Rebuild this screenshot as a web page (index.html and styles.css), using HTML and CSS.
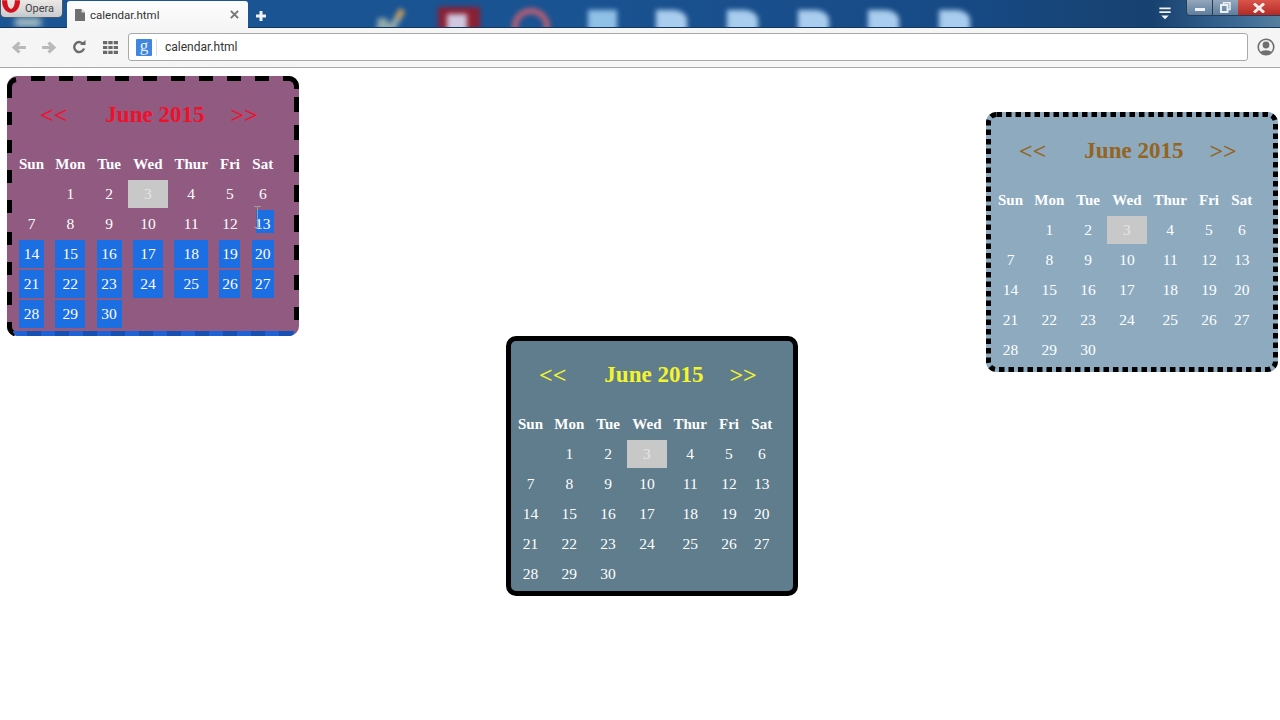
FILE: index.html
```html
<!DOCTYPE html>
<html lang="en">
<head>
<meta charset="utf-8">
<title>calendar.html</title>
<link rel="stylesheet" href="styles.css">
</head>
<body>
<header class="browser">
  <div class="strip">
    <div class="desktop">
      <svg class="blurred b-chart" viewBox="0 0 32 28"><path d="M2 28 L4 14 L12 14 L16 20 L26 4 L31 8 L20 28Z" fill="#8fa7a8"/><path d="M21 12L26 4L31 8L25 16Z" fill="#c99c58"/></svg>
      <div class="blurred b-red"><span></span></div>
      <div class="blurred b-ring"></div>
      <div class="blurred b-doc b1"></div>
      <div class="blurred b-doc b2"></div>
      <div class="blurred b-doc b3"></div>
      <div class="blurred b-doc b4"></div>
      <div class="blurred b-doc b5"></div>
      <div class="blurred b-doc b6"></div>
    </div>
    <div class="opera">
      <svg class="opera-logo" viewBox="0 0 20 14"><path d="M0 0 C0 8 4 13 9.500 13 C15 13 19 8 19 0 L13.500 0 C13.500 6 11.500 9 9.500 9 C7.500 9 5.500 6 5.500 0Z" fill="#d4101c"/></svg>
      <span>Opera</span>
    </div>
    <div class="tab">
      <svg class="tab-icon" viewBox="0 0 10 12"><path d="M0 0H6.500L10 3.500V12H0Z" fill="#6f6f6f"/><path d="M6.500 0V3.500H10" fill="#d8d8d8"/></svg>
      <span class="tab-title">calendar.html</span>
      <svg class="tab-x" viewBox="0 0 10 10"><path d="M1 1L9 9M9 1L1 9" stroke="#777" stroke-width="2.200"/></svg>
    </div>
    <svg class="newtab" viewBox="0 0 12 12"><path d="M6 1V11M1 6H11" stroke="#f0f0f6" stroke-width="3"/></svg>
    <svg class="menu-ic" viewBox="0 0 14 16"><path d="M1 1.500H13M1 5.500H13" stroke="#f2f2f2" stroke-width="2"/><path d="M3 9H11L7 13Z" fill="#f2f2f2"/></svg>
    <div class="winbtns">
      <div class="wb wb-min"><i></i></div>
      <div class="wb wb-max">
        <svg viewBox="0 0 11 11"><path d="M3.500 2.500V.8H10V7.500H8" fill="none" stroke="#e8eef4" stroke-width="1.500"/><rect x="1" y="3" width="6.500" height="7" fill="none" stroke="#e8eef4" stroke-width="2"/></svg>
      </div>
      <div class="wb wb-close"><svg viewBox="0 0 14 10"><path d="M2 .5L12 9.500M12 .5L2 9.500" stroke="#f4eeee" stroke-width="3"/></svg></div>
    </div>
  </div>
  <div class="toolbar">
    <svg class="nav back" viewBox="0 0 14 12"><path d="M13 6H4M7 1.500L2 6L7 10.500" fill="none" stroke="#b9b9b9" stroke-width="3"/></svg>
    <svg class="nav fwd" viewBox="0 0 14 12"><path d="M1 6H10M7 1.500L12 6L7 10.500" fill="none" stroke="#b9b9b9" stroke-width="3"/></svg>
    <svg class="nav reload" viewBox="0 0 14 14"><path d="M11.500 4.500A5 5 0 1 0 12 8.500" fill="none" stroke="#6a6a6a" stroke-width="2.400"/><path d="M8 5H13.500V0Z" fill="#6a6a6a"/></svg>
    <svg class="nav apps" viewBox="0 0 14 12"><path d="M0 0h4v3H0zM5 0h4v3H5zM10 0h4v3h-4zM0 4.500h4v3H0zM5 4.500h4v3H5zM10 4.500h4v3h-4zM0 9h4v3H0zM5 9h4v3H5zM10 9h4v3h-4z" fill="#696969"/></svg>
    <div class="omnibox">
      <span class="gicon">g</span>
      <span class="omni-text">calendar.html</span>
    </div>
    <svg class="profile" viewBox="0 0 18 18"><circle cx="9" cy="9" r="7.800" fill="#f4f4f4" stroke="#6f6f6f" stroke-width="1.600"/><circle cx="9" cy="7" r="3.400" fill="#6f6f6f"/><path d="M3.500 14.500C4.500 11.500 13.500 11.500 14.500 14.500L9 17Z" fill="#6f6f6f"/></svg>
  </div>
</header>

<main class="canvas">
  <section class="cal cal-plum">
    <svg class="frame" viewBox="0 0 292 260">
      <path class="edge" d="M24 2.500H38M52 2.500H66M80 2.500H94M108 2.500H122M136 2.500H150M164 2.500H178M192 2.500H206M220 2.500H234M248 2.500H262M276 2.500H281A8 8 0 0 1 289.500 10V13
        M2.500 22V12A8 8 0 0 1 9 3.500M2.500 36V49M2.500 64V77M2.500 94V107M2.500 124V137M2.500 156V169M2.500 186V199M2.500 216V229M2.500 246V250A8 8 0 0 0 8 258
        M289.500 21V36M289.500 49V64M289.500 79V96M289.500 109V126M289.500 139V156M289.500 169V184M289.500 199V214M289.500 231V244"/>
    </svg>
    <div class="cal-head"><span class="arrow">&lt;&lt;</span><span class="month">June 2015</span><span class="arrow">&gt;&gt;</span></div>
    <div class="grid">
      <div class="dow">Sun</div><div class="dow">Mon</div><div class="dow">Tue</div><div class="dow">Wed</div><div class="dow">Thur</div><div class="dow">Fri</div><div class="dow">Sat</div>
      <div class="d"></div><div class="d">1</div><div class="d">2</div><div class="d today">3</div><div class="d">4</div><div class="d">5</div><div class="d">6</div>
      <div class="d">7</div><div class="d">8</div><div class="d">9</div><div class="d">10</div><div class="d">11</div><div class="d">12</div><div class="d part">13</div>
      <div class="d sel">14</div><div class="d sel">15</div><div class="d sel">16</div><div class="d sel">17</div><div class="d sel">18</div><div class="d sel">19</div><div class="d sel">20</div>
      <div class="d sel">21</div><div class="d sel">22</div><div class="d sel">23</div><div class="d sel">24</div><div class="d sel">25</div><div class="d sel">26</div><div class="d sel">27</div>
      <div class="d sel">28</div><div class="d sel">29</div><div class="d sel">30</div>
    </div>
    <div class="selbar"></div>
    <svg class="ibeam" viewBox="0 0 7 22"><path d="M0 .5H7M3.500 .5V21.500M0 21.500H7" fill="none" stroke="#9a9a9a" stroke-width="1"/></svg>
  </section>

  <section class="cal cal-slate">
    <div class="cal-head"><span class="arrow">&lt;&lt;</span><span class="month">June 2015</span><span class="arrow">&gt;&gt;</span></div>
    <div class="grid">
      <div class="dow">Sun</div><div class="dow">Mon</div><div class="dow">Tue</div><div class="dow">Wed</div><div class="dow">Thur</div><div class="dow">Fri</div><div class="dow">Sat</div>
      <div class="d"></div><div class="d">1</div><div class="d">2</div><div class="d today">3</div><div class="d">4</div><div class="d">5</div><div class="d">6</div>
      <div class="d">7</div><div class="d">8</div><div class="d">9</div><div class="d">10</div><div class="d">11</div><div class="d">12</div><div class="d">13</div>
      <div class="d">14</div><div class="d">15</div><div class="d">16</div><div class="d">17</div><div class="d">18</div><div class="d">19</div><div class="d">20</div>
      <div class="d">21</div><div class="d">22</div><div class="d">23</div><div class="d">24</div><div class="d">25</div><div class="d">26</div><div class="d">27</div>
      <div class="d">28</div><div class="d">29</div><div class="d">30</div>
    </div>
  </section>

  <section class="cal cal-sky">
    <svg class="frame" viewBox="0 0 292 260">
      <rect class="edge dots" x="2.500" y="2.500" width="287" height="255" rx="8"/>
    </svg>
    <div class="cal-head"><span class="arrow">&lt;&lt;</span><span class="month">June 2015</span><span class="arrow">&gt;&gt;</span></div>
    <div class="grid">
      <div class="dow">Sun</div><div class="dow">Mon</div><div class="dow">Tue</div><div class="dow">Wed</div><div class="dow">Thur</div><div class="dow">Fri</div><div class="dow">Sat</div>
      <div class="d"></div><div class="d">1</div><div class="d">2</div><div class="d today">3</div><div class="d">4</div><div class="d">5</div><div class="d">6</div>
      <div class="d">7</div><div class="d">8</div><div class="d">9</div><div class="d">10</div><div class="d">11</div><div class="d">12</div><div class="d">13</div>
      <div class="d">14</div><div class="d">15</div><div class="d">16</div><div class="d">17</div><div class="d">18</div><div class="d">19</div><div class="d">20</div>
      <div class="d">21</div><div class="d">22</div><div class="d">23</div><div class="d">24</div><div class="d">25</div><div class="d">26</div><div class="d">27</div>
      <div class="d">28</div><div class="d">29</div><div class="d">30</div>
    </div>
  </section>
</main>
</body>
</html>
```
FILE: styles.css
```css
* { box-sizing: border-box; }
html, body { margin: 0; height: 100%; overflow: hidden; background: #fff; }
body { display: flex; flex-direction: column; width: 1280px; height: 720px; font-family: "Liberation Serif", serif; }

.browser { flex: none; font-family: Roboto, "Liberation Sans", sans-serif; }
.strip { position: relative; height: 28px; display: flex; align-items: flex-start; overflow: hidden;
  background: linear-gradient(90deg, #1b5594 0%, #1a5392 45%, #174a85 75%, #17416f 90%, #3d6b96 97%, #55809f 100%); }
.strip::after { content: ""; position: absolute; left: 0; right: 0; bottom: 0; height: 1px; background: #12355f; }

.desktop { position: absolute; inset: 0; }
.blurred { position: absolute; filter: blur(2.500px); }
.b-chart { left: 374px; top: 4px; width: 32px; height: 28px; }
.b-red { left: 438px; top: 7px; width: 42px; height: 26px; background: #8b1f33; }
.b-red span { display: block; margin: 7px 0 0 9px; width: 20px; height: 20px; background: #cfc8de; }
.b-ring { left: 512px; top: 8px; width: 38px; height: 38px; border-radius: 50%; border: 6px solid #b85f74; }
.b-doc { top: 10px; width: 31px; height: 23px; background: #a9cdee; border-top-right-radius: 14px 10px; }
.b1 { left: 588px; width: 29px; border-radius: 0; background: #8fc0e6; }
.b2 { left: 656px; }
.b3 { left: 727px; }
.b4 { left: 798px; }
.b5 { left: 868px; }
.b6 { left: 939px; }

.opera { position: relative; flex: none; width: 63px; height: 18px; margin-right: 4px;
  background: linear-gradient(#ece9e6, #c9ccd0); border: 1px solid #46566b; border-top: 0; border-radius: 0 0 5px 5px;
  font-size: 11px; color: #444; padding-left: 24px; line-height: 17px; }
.opera::after { content: ""; position: absolute; left: 14px; top: 18px; width: 26px; height: 9px; background: #a9c0c4; filter: blur(3px); }
.opera-logo { position: absolute; left: 1px; top: 0; width: 19px; height: 14px; }

.tab { position: relative; flex: none; width: 181px; height: 27px; margin-top: 1px; padding: 0 8px; display: flex; align-items: center;
  background: linear-gradient(#fdfdfd, #f5f5f5); border-radius: 3px 3px 0 0; z-index: 1; }
.tab-icon { width: 10px; height: 12px; flex: none; margin-right: 5px; }
.tab-title { flex: 1; font-size: 11.500px; color: #333; }
.tab-x { width: 9px; height: 9px; flex: none; margin-right: 1px; }
.newtab { position: relative; flex: none; width: 12px; height: 12px; margin: 10px 0 0 7px; }
.menu-ic { position: absolute; left: 1158px; top: 7px; width: 14px; height: 15px; }

.winbtns { position: absolute; left: 1186px; top: 0; width: 94px; height: 16px; display: flex; border: 1px solid #2a3c55; border-top: 0; border-right: 0; border-radius: 0 0 0 4px; overflow: hidden; }
.wb { display: flex; align-items: center; justify-content: center; height: 15px; flex: none; }
.wb-min { width: 26px; background: linear-gradient(#93a7bb, #5d7d9e); border-right: 1px solid #2a3c55; }
.wb-min i { display: block; width: 10px; height: 3px; margin-top: 3px; background: #eef2f6; }
.wb-max { width: 25px; background: linear-gradient(#93a7bb, #5d7d9e); }
.wb-max svg { width: 11px; height: 11px; }
.wb-close { width: 42px; background: linear-gradient(#d9554b, #b52a26); }
.wb-close svg { width: 14px; height: 10px; }

.toolbar { height: 40px; display: flex; align-items: center; background: #f5f5f5; border-bottom: 1px solid #a9a9a9; padding-bottom: 1px; }
.nav { flex: none; width: 15px; height: 13px; }
.back { margin-left: 12px; }
.fwd { margin-left: 14px; }
.reload { width: 14px; height: 14px; margin-left: 16px; }
.apps { margin-left: 17px; }
.omnibox { flex: none; width: 1120px; height: 28px; margin-left: 10px; display: flex; align-items: center; padding-left: 7px;
  background: #fff; border: 1px solid #a9a9a9; border-radius: 3px; }
.gicon { flex: none; width: 16px; height: 17px; background: #3f86e0; color: #e8f0fb; font: 17px/14px "Liberation Serif", serif; text-align: center; border-radius: 1px; }
.omni-text { margin-left: 4px; padding-left: 8px; border-left: 1px solid #ddd; line-height: 17px; font-size: 12px; color: #333; }
.profile { flex: none; width: 18px; height: 18px; margin-left: 9px; }

.canvas { position: relative; flex: 1; background: #fff; }

.cal { position: absolute; width: 292px; height: 260px; border-radius: 10px; padding: 0 0 0 7px; color: #fff; background-clip: border-box; }
.cal-plum { left: 7px; top: 8px; background-color: #915a80; border: 5px solid transparent; --ink: #f0102a; }
.cal-slate { left: 506px; top: 268px; background-color: #5f7d8c; border: 5px solid #000; --ink: #f4f42c; }
.cal-sky { left: 986px; top: 44px; background-color: #8daabf; border: 5px solid transparent; --ink: #946420; }

.frame { position: absolute; left: -5px; top: -5px; width: 292px; height: 260px; }
.edge { fill: none; stroke: #000; stroke-width: 5; }
.dots { stroke-dasharray: 5.500 4; }

.cal-head { position: relative; height: 60px; margin-left: -5px; display: flex; align-items: center; color: var(--ink); padding-top: 8px; }
.arrow { font-size: 24px; font-weight: bold; line-height: 28px; }
.arrow:first-child { margin-left: 26px; }
.month { margin: 0 26px 0 38px; font-size: 23px; font-weight: bold; line-height: 28px; }

.grid { display: grid; grid-template-columns: 25px 30px 25px 30px 34px 21px 22px; column-gap: 11.300px; grid-auto-rows: 28px; row-gap: 2px; margin-top: 9px; }
.dow, .d { display: flex; align-items: center; justify-content: center; line-height: 28px; white-space: nowrap; }
.dow { font-size: 15px; font-weight: bold; }
.d { font-size: 15.500px; }
.today { background: #c8c8c8; color: #e6e6e6; margin: 0 -5px; }
.sel { background: #1c6ee3; }
.part { background: linear-gradient(#1c6ee3, #1c6ee3) 4px 0 / 18px 23px no-repeat; }

.selbar { position: absolute; left: 1px; right: -1px; bottom: -5px; height: 5px; border-radius: 0 0 6px 6px;
  background: repeating-linear-gradient(90deg, #1d62d6 0 14px, #1550b4 14px 28px); }
.ibeam { position: absolute; left: 242px; top: 125px; width: 7px; height: 22px; }
```
